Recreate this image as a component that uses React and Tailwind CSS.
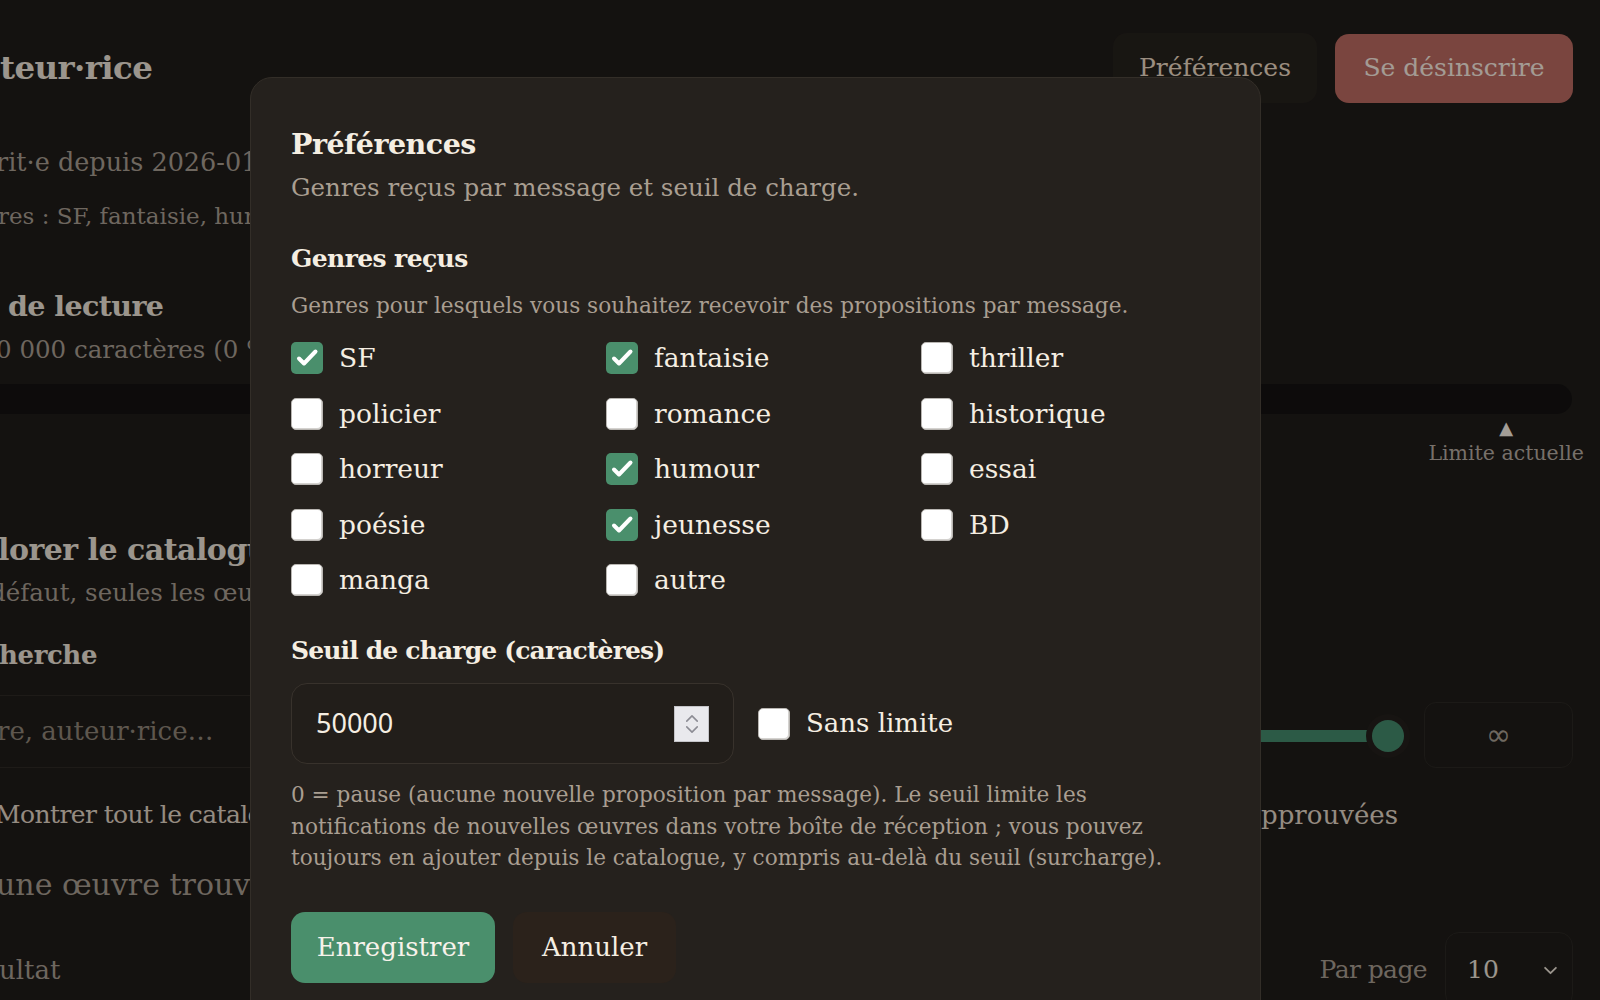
import { useState } from 'react';

const GENRES = [
  ['SF', true], ['fantaisie', true], ['thriller', false],
  ['policier', false], ['romance', false], ['historique', false],
  ['horreur', false], ['humour', true], ['essai', false],
  ['poésie', false], ['jeunesse', true], ['BD', false],
  ['manga', false], ['autre', false],
];

function CheckBox({ checked, onClick }) {
  if (checked) {
    return (
      <span onClick={onClick} className="w-8 h-8 shrink-0 rounded-[5px] bg-[#4a8f6c] flex items-center justify-center">
        <svg viewBox="0 0 32 32" className="w-8 h-8" fill="none" stroke="#ffffff" strokeWidth="4" strokeLinecap="round" strokeLinejoin="round">
          <path d="M8 16.5l5 5L24.5 9.5" />
        </svg>
      </span>
    );
  }
  return <span onClick={onClick} className="w-8 h-8 shrink-0 rounded-[5px] bg-white border border-[#b9b6b2] shadow-[inset_-1px_-1px_0_#d4d2cf]" />;
}

function PreferencesModal({ onClose }) {
  const [genres, setGenres] = useState(GENRES);
  const [noLimit, setNoLimit] = useState(false);
  const [limit, setLimit] = useState(50000);

  const toggle = (i) => setGenres(genres.map((g, j) => (j === i ? [g[0], !g[1]] : g)));

  return (
    <div className="absolute left-[250px] top-[77px] w-[1011px] h-[960px] rounded-[22px] bg-[#25211d] border border-[#332e28] px-[40px] pt-[48px] font-['DejaVu_Serif',serif]">
      <h2 className="text-[28.5px] leading-[36px] font-bold text-[#f5eee2] tracking-[-0.5px]">Préférences</h2>
      <p className="mt-[10px] text-[24.5px] leading-[32px] text-[#a99e91]">Genres reçus par message et seuil de charge.</p>

      <h3 className="mt-[38px] text-[25px] leading-[34px] font-bold text-[#f5eee2] tracking-[-0.6px]">Genres reçus</h3>
      <p className="mt-[15px] text-[21.6px] leading-[30px] text-[#a99e91]">Genres pour lesquels vous souhaitez recevoir des propositions par message.</p>

      <div className="mt-[17px] grid grid-cols-[315px_315px_315px] gap-y-[15.5px]">
        {genres.map(([name, on], i) => (
          <label key={name} className="h-[40px] flex items-center gap-[16px] cursor-pointer">
            <CheckBox checked={on} onClick={() => toggle(i)} />
            <span className="text-[26.5px] text-[#f5eee2]">{name}</span>
          </label>
        ))}
      </div>

      <h3 className="mt-[34px] text-[25px] leading-[34px] font-bold text-[#f5eee2] tracking-[-0.85px]">Seuil de charge (caractères)</h3>
      <div className="mt-[15px] flex items-center">
        <div className="w-[443px] h-[81px] rounded-[16px] border border-[#38322c] bg-[#221e1a] flex items-center pl-[24px] pr-[24px]">
          <input
            value={limit}
            onChange={(e) => setLimit(e.target.value)}
            className="flex-1 min-w-0 bg-transparent outline-none text-[27px] text-[#f5eee2] font-['Noto_Sans',sans-serif]"
          />
          <div className="w-[35px] h-[36px] bg-[#e9e9ed] border border-[#c4c4c8] flex flex-col items-center justify-center gap-[2px]">
            <svg viewBox="0 0 16 10" className="w-[14px] h-[9px]" fill="none" stroke="#8c8c94" strokeWidth="1.8" strokeLinecap="round" strokeLinejoin="round">
              <path d="M2 8l6-6 6 6" />
            </svg>
            <svg viewBox="0 0 16 10" className="w-[14px] h-[9px]" fill="none" stroke="#8c8c94" strokeWidth="1.8" strokeLinecap="round" strokeLinejoin="round">
              <path d="M2 2l6 6 6-6" />
            </svg>
          </div>
        </div>
        <label className="ml-[24px] flex items-center gap-[16px] cursor-pointer">
          <CheckBox checked={noLimit} onClick={() => setNoLimit(!noLimit)} />
          <span className="text-[26px] text-[#f5eee2]">Sans limite</span>
        </label>
      </div>

      <p className="mt-[15px] text-[21.6px] leading-[31.5px] text-[#a99e91]">
        0 = pause (aucune nouvelle proposition par message). Le seuil limite les<br />
        notifications de nouvelles œuvres dans votre boîte de réception ; vous pouvez<br />
        toujours en ajouter depuis le catalogue, y compris au-delà du seuil (surcharge).
      </p>

      <div className="mt-[38px] flex gap-[18px]">
        <button className="w-[204px] h-[71px] rounded-[14px] bg-[#4a8f6c] text-[26px] text-[#f7f2ea]">Enregistrer</button>
        <button onClick={onClose} className="w-[163px] h-[71px] rounded-[14px] bg-[#2b221b] text-[26px] text-[#f5eee2]">Annuler</button>
      </div>
    </div>
  );
}

export default function App() {
  const [open, setOpen] = useState(true);

  return (
    <div className="relative w-[1600px] h-[1000px] overflow-hidden bg-[#1f1c19] font-['DejaVu_Serif',serif]">
      <div className="flex flex-col pt-[33px]">
        <div className="h-[70px] flex items-center">
          <h1 className="text-[32.5px] font-bold text-[#eee5d9] tracking-[-0.6px]">teur·rice</h1>
          <div className="ml-auto mr-[27px] flex items-center gap-[18px]">
            <button onClick={() => setOpen(true)} className="h-[70px] px-[26px] rounded-[14px] bg-[#26221d] text-[25px] text-[#eddbc5]">Préférences</button>
            <button className="w-[238px] h-[69px] rounded-[14px] bg-[#bc6a61] text-[25px] text-[#fbefe4]">Se désinscrire</button>
          </div>
        </div>

        <p className="mt-[41px] -ml-[4px] text-[25.5px] leading-[36px] text-[#a99e92] whitespace-nowrap">rit·e depuis 2026-01-12</p>
        <p className="mt-[20px] -ml-[2px] text-[23px] leading-[32px] text-[#a99e92] whitespace-nowrap">res : SF, fantaisie, humour, jeunesse</p>

        <h2 className="mt-[56px] ml-[8px] text-[28.5px] leading-[36px] font-bold text-[#eee5d9] tracking-[-0.6px]">de lecture</h2>
        <p className="mt-[9px] -ml-[4px] text-[24.5px] leading-[34px] text-[#a99e92] whitespace-nowrap">0 000 caractères (0 %)</p>

        <div className="mt-[17px] w-[1572px] h-[30px] rounded-r-full bg-[#141211]" />
        <div className="self-end mr-[16px] mt-[6px] flex flex-col items-center">
          <span className="text-[18px] leading-[16px] text-[#fbf3e9]">▲</span>
          <span className="mt-[3px] text-[20.5px] leading-[28px] text-[#b7ada3]">Limite actuelle</span>
        </div>

        <h2 className="mt-[64px] -ml-[2px] text-[30px] leading-[38px] font-bold text-[#eee5d9] tracking-[-0.5px] whitespace-nowrap">lorer le catalogue</h2>
        <p className="mt-[7px] -ml-[10px] text-[24.5px] leading-[34px] text-[#a99e92] whitespace-nowrap">défaut, seules les œuvres approuvées</p>
        <h3 className="mt-[28px] -ml-[1px] text-[26px] leading-[34px] font-bold text-[#eee5d9] tracking-[-0.4px]">herche</h3>

        <div className="mt-[23px] flex items-end">
          <div className="w-[1050px] h-[73px] border-y border-[#2e2a25] flex items-center">
            <span className="-ml-[3px] text-[26px] text-[#918679] whitespace-nowrap">re, auteur·rice…</span>
          </div>
          <div className="ml-[54px] w-[300px] h-[65px] flex items-center">
            <div className="flex-1 h-[12px] bg-[#448a6c]" />
            <div className="w-[32px] h-[32px] rounded-full bg-[#448a6c] shadow-[0_0_0_6px_#24201c]" />
          </div>
          <div className="ml-[20px] w-[149px] h-[66px] rounded-[12px] border border-[#2b2824] flex items-center justify-center text-[30px] leading-none text-[#a9a094] font-['DejaVu_Sans',sans-serif]">∞</div>
        </div>

        <div className="mt-[29px] h-[36px] flex items-center">
          <span className="-ml-[5px] text-[25px] text-[#e4d7c8] tracking-[-0.6px] whitespace-nowrap">Montrer tout le catalogue</span>
          <span className="ml-auto mr-[202px] text-[26px] text-[#e4d7c8] whitespace-nowrap">non approuvées</span>
        </div>

        <p className="mt-[32px] -ml-[4px] text-[30px] leading-[40px] text-[#a99e92] whitespace-nowrap">une œuvre trouvée</p>

        <div className="mt-[27px] flex items-start">
          <span className="mt-[20px] -ml-[1px] text-[26px] leading-[36px] text-[#a99e92]">ultat</span>
          <div className="ml-auto mr-[27px] flex items-center gap-[18px]">
            <span className="text-[25px] text-[#a99e92] tracking-[-0.6px]">Par page</span>
            <div className="w-[128px] h-[76px] rounded-[14px] border border-[#2b2824] flex items-center pl-[21px] pr-[14px]">
              <span className="text-[25px] text-[#eee5d9]">10</span>
              <svg viewBox="0 0 16 10" className="ml-auto w-[15px] h-[9px]" fill="none" stroke="#eee5d9" strokeWidth="2" strokeLinecap="round" strokeLinejoin="round">
                <path d="M2 2l6 6 6-6" />
              </svg>
            </div>
          </div>
        </div>
      </div>

      {open && (
        <>
          <div className="absolute inset-0 bg-black/35" />
          <PreferencesModal onClose={() => setOpen(false)} />
        </>
      )}
    </div>
  );
}
